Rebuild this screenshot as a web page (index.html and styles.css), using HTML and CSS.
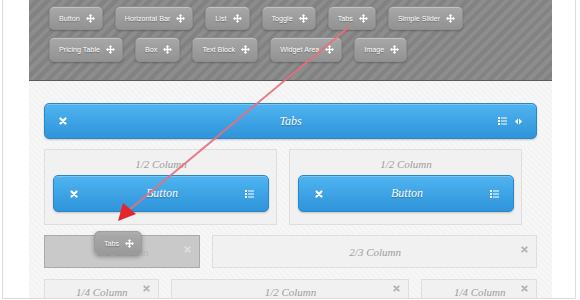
FILE: index.html
```html
<!DOCTYPE html>
<html lang="en">
<head>
  <meta charset="UTF-8">
  <title>Layout Builder</title>
  <link rel="stylesheet" href="styles.css">
</head>
<body>

<svg width="0" height="0" class="defs">
  <defs>
    <symbol id="move" viewBox="0 0 10 10">
      <path d="M5 0 L7 2.2 H5.8 V4.2 H7.8 V3 L10 5 L7.8 7 V5.8 H5.8 V7.8 H7 L5 10 L3 7.8 H4.2 V5.8 H2.2 V7 L0 5 L2.2 3 V4.2 H4.2 V2.2 H3 Z" fill="#fff"/>
    </symbol>
    <symbol id="close" viewBox="0 0 8 8">
      <path d="M1.5 1.5 L6.5 6.5 M6.5 1.5 L1.5 6.5" stroke="currentColor" stroke-width="2.2" stroke-linecap="round"/>
    </symbol>
    <symbol id="list" viewBox="0 0 9 8">
      <rect x="0" y="0" width="2" height="2" fill="#fff"/>
      <rect x="3" y="0.5" width="6" height="1" fill="#fff"/>
      <rect x="0" y="3" width="2" height="2" fill="#fff"/>
      <rect x="3" y="3.5" width="6" height="1" fill="#fff"/>
      <rect x="0" y="6" width="2" height="2" fill="#fff"/>
      <rect x="3" y="6.5" width="6" height="1" fill="#fff"/>
    </symbol>
    <symbol id="arrows" viewBox="0 0 8 8">
      <path d="M3.4 0.5 L0 4 L3.4 7.5 Z M4.6 0.5 L8 4 L4.6 7.5 Z" fill="#fff"/>
    </symbol>
  </defs>
</svg>

<div class="frame">
  <div class="builder">

    <div class="toolbar">
      <div class="tool-row">
        <span class="tool">Button <svg class="ico-move"><use href="#move"/></svg></span>
        <span class="tool">Horizontal Bar <svg class="ico-move"><use href="#move"/></svg></span>
        <span class="tool">List <svg class="ico-move"><use href="#move"/></svg></span>
        <span class="tool">Toggle <svg class="ico-move"><use href="#move"/></svg></span>
        <span class="tool">Tabs <svg class="ico-move"><use href="#move"/></svg></span>
        <span class="tool">Simple Slider <svg class="ico-move"><use href="#move"/></svg></span>
      </div>
      <div class="tool-row">
        <span class="tool">Pricing Table <svg class="ico-move"><use href="#move"/></svg></span>
        <span class="tool">Box <svg class="ico-move"><use href="#move"/></svg></span>
        <span class="tool">Text Block <svg class="ico-move"><use href="#move"/></svg></span>
        <span class="tool">Widget Area <svg class="ico-move"><use href="#move"/></svg></span>
        <span class="tool">Image <svg class="ico-move"><use href="#move"/></svg></span>
      </div>
    </div>

    <div class="canvas">

      <div class="block block-wide">
        <svg class="ico-close"><use href="#close"/></svg>
        <span class="block-title">Tabs</span>
        <span class="block-tools">
          <svg class="ico-list"><use href="#list"/></svg>
          <svg class="ico-arrows"><use href="#arrows"/></svg>
        </span>
      </div>

      <div class="row row-halves">
        <div class="column">
          <div class="col-title">1/2 Column</div>
          <div class="block">
            <svg class="ico-close"><use href="#close"/></svg>
            <span class="block-title">Button</span>
            <span class="block-tools"><svg class="ico-list"><use href="#list"/></svg></span>
          </div>
        </div>
        <div class="column">
          <div class="col-title">1/2 Column</div>
          <div class="block">
            <svg class="ico-close"><use href="#close"/></svg>
            <span class="block-title">Button</span>
            <span class="block-tools"><svg class="ico-list"><use href="#list"/></svg></span>
          </div>
        </div>
      </div>

      <div class="row row-thirds">
        <div class="column column-empty column-drop">
          <span class="col-title">1/3 Column</span>
          <svg class="ico-x"><use href="#close"/></svg>
        </div>
        <div class="column column-empty">
          <span class="col-title">2/3 Column</span>
          <svg class="ico-x"><use href="#close"/></svg>
        </div>
      </div>

      <div class="row row-quarters">
        <div class="column column-empty">
          <span class="col-title">1/4 Column</span>
          <svg class="ico-x"><use href="#close"/></svg>
        </div>
        <div class="column column-empty">
          <span class="col-title">1/2 Column</span>
          <svg class="ico-x"><use href="#close"/></svg>
        </div>
        <div class="column column-empty">
          <span class="col-title">1/4 Column</span>
          <svg class="ico-x"><use href="#close"/></svg>
        </div>
      </div>

    </div>
  </div>

  <!-- the element being dragged -->
  <span class="tool drag-chip">Tabs <svg class="ico-move"><use href="#move"/></svg></span>

  <svg class="drag-arrow" width="580" height="300" viewBox="0 0 580 300">
    <line x1="348" y1="27" x2="128" y2="210" stroke="#e8707e" stroke-width="2" stroke-linecap="round" opacity="0.9"/>
    <path d="M117 221 L122 203 L135 214 Z" fill="#e3262b"/>
  </svg>
</div>

</body>
</html>
```

FILE: styles.css
```css
body {
  margin: 0;
  background: #fff;
  font-family: "Liberation Sans", Arial, sans-serif;
}

.defs {
  position: absolute;
}

.frame {
  position: relative;
  width: 572px;
  height: 298px;
  margin-left: 2px;
  border: 1px solid #dcdcdc;
  border-top: none;
  overflow: hidden;
}

.builder {
  margin-left: 26px;
  width: 523px;
}

/* toolbar with draggable elements */
.toolbar {
  height: 81px;
  padding: 6px 0 0 20px;
  box-sizing: border-box;
  background-color: #888;
  background-image: repeating-linear-gradient(135deg, #8d8d8d 0 4px, #828282 4px 8px);
  border-bottom: 1px solid #5a5a5a;
}

.tool-row {
  display: flex;
  gap: 12px;
  margin-bottom: 7px;
}

.tool {
  display: inline-flex;
  align-items: center;
  gap: 6px;
  height: 24px;
  padding: 0 7px 0 9px;
  box-sizing: border-box;
  font-size: 7.2px;
  color: #fff;
  text-shadow: 0 1px 1px rgba(0,0,0,0.35);
  background: linear-gradient(#a8a8a8, #929292);
  border: 1px solid #8e8e8e;
  border-radius: 5px;
  box-shadow: inset 0 1px 0 rgba(255,255,255,0.3), 0 1px 2px rgba(0,0,0,0.25);
}

.tool-row:last-child .tool {
  height: 25px;
}

.ico-move {
  width: 9px;
  height: 9px;
}

/* drop area */
.canvas {
  height: 220px;
  padding: 22px 15px 0;
  background-color: #f7f7f7;
  background-image: repeating-linear-gradient(45deg, rgba(0,0,0,0.015) 0 2px, transparent 2px 4px);
}

.block {
  display: grid;
  grid-template-columns: 1fr auto 1fr;
  align-items: center;
  height: 37px;
  padding: 0 14px 0 16px;
  box-sizing: border-box;
  background: linear-gradient(#4fb4f0, #2f94da);
  border: 1px solid #2b86c8;
  border-radius: 5px;
  box-shadow: inset 0 1px 0 rgba(255,255,255,0.25), 0 1px 2px rgba(0,0,0,0.2);
  color: #fff;
}

.block-wide {
  height: 36px;
  padding: 0 14px;
}

.block-title {
  font-family: "Liberation Serif", "Times New Roman", serif;
  font-style: italic;
  font-size: 12px;
  text-shadow: 0 1px 1px rgba(0,0,0,0.3);
}

.block-tools {
  justify-self: end;
  display: flex;
  align-items: center;
  gap: 8px;
}

.ico-close {
  width: 8px;
  height: 8px;
  color: #fff;
}

.ico-list {
  width: 9px;
  height: 8px;
}

.ico-arrows {
  width: 7px;
  height: 7px;
}

.row {
  display: flex;
  gap: 12px;
  margin-top: 10px;
}

.row-halves .column {
  width: 233px;
  height: 76px;
}

.column {
  box-sizing: border-box;
  background: #f1f1f1;
  border: 1px solid #dedede;
  padding: 0 7px 0 8px;
}

.col-title {
  font-family: "Liberation Serif", "Times New Roman", serif;
  font-style: italic;
  font-size: 11px;
  color: #9d9d9d;
}

.row-halves .col-title {
  text-align: center;
  margin: 8px 0 5px;
}

.column-empty {
  position: relative;
  display: flex;
  align-items: center;
  justify-content: center;
  height: 33px;
}

.ico-x {
  position: absolute;
  right: 8px;
  top: 7px;
  width: 7px;
  height: 7px;
  color: #b4b4b4;
}

.row-thirds .column:first-child {
  width: 157px;
}

.row-thirds .column:last-child {
  width: 326px;
}

.row-thirds .ico-x {
  top: 10px;
}

.column-drop {
  background: #c9c9c9;
  border-color: #a9a9a9;
}

.column-drop .col-title {
  color: #b8b8b8;
}

.column-drop .ico-x {
  color: #dedede;
}

.row-quarters {
  margin-top: 11px;
}

.row-quarters .column {
  height: 40px;
  align-items: flex-start;
  padding-top: 6px;
}

.row-quarters .ico-x {
  top: 5px;
}

.row-quarters .column:nth-child(1) {
  width: 115px;
}

.row-quarters .column:nth-child(2) {
  width: 240px;
}

.row-quarters .column:nth-child(3) {
  width: 116px;
}

/* dragged item and pointer arrow */
.drag-chip {
  position: absolute;
  left: 91px;
  top: 231px;
  gap: 6px;
  background: linear-gradient(#aaaaaa, #979797);
  border-color: #9a9a9a;
  opacity: 0.95;
  box-shadow: 0 2px 4px rgba(0,0,0,0.3);
}

.drag-arrow {
  position: absolute;
  left: -2px;
  top: 0;
  pointer-events: none;
}
```
